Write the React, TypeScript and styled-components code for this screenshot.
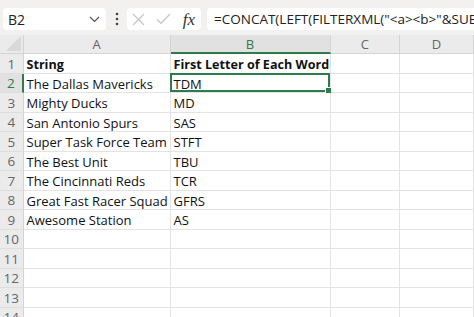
import React from "react";
import styled, { createGlobalStyle } from "styled-components";

const Global = createGlobalStyle`
  html, body { margin: 0; padding: 0; background: #ffffff; }
  body { font-family: "Open Sans", "Noto Sans", sans-serif; overflow: hidden; }
`;

const GREEN = "#2f7a4f";

const Page = styled.div`
  width: 474px;
  height: 317px;
  overflow: hidden;
  display: flex;
  flex-direction: column;
`;

const Toolbar = styled.div`
  height: 35px;
  flex: none;
  background: #f2f1f0;
  display: flex;
  align-items: flex-start;
  padding: 8px 0 0 3px;
  box-sizing: border-box;
`;

const Box = styled.div<{ $w?: string }>`
  height: 22px;
  background: #ffffff;
  border-radius: 4px;
  display: flex;
  align-items: center;
  box-sizing: border-box;
  width: ${(p) => p.$w || "auto"};
  flex: none;
`;

const NameBox = styled(Box)`
  justify-content: space-between;
  padding: 0 6px 0 5px;
  font-size: 14px;
  color: #222;
`;

const Dots = styled.div`
  width: 21px;
  flex: none;
  height: 22px;
  display: flex;
  align-items: center;
  justify-content: center;
`;

const IconBox = styled(Box)`
  padding: 0 4px 0 5px;
  justify-content: space-between;
`;

const Fx = styled.span`
  font-family: "Liberation Serif", "DejaVu Serif", serif;
  font-style: italic;
  font-size: 17px;
  color: #333;
  padding-right: 2px;
  line-height: 1;
`;

const FormulaBox = styled(Box)`
  margin-left: 6px;
  flex: 1;
  padding-left: 7px;
  border-radius: 4px 0 0 4px;
  font-size: 13.5px;
  color: #222;
  white-space: nowrap;
  overflow: hidden;
`;

const Grid = styled.div`
  display: grid;
  grid-template-columns: 23.5px 147px 160px 69.5px 74px;
  grid-template-rows: 19px repeat(14, 19.5px);
  flex: none;
`;

const ColHead = styled.div<{ $sel?: boolean }>`
  background: ${(p) => (p.$sel ? "#e1e1e1" : "#ebebeb")};
  border-right: 1px solid #d4d4d4;
  border-bottom: ${(p) => (p.$sel ? `2px solid ${GREEN}` : "1px solid #d4d4d4")};
  box-sizing: border-box;
  display: flex;
  align-items: center;
  justify-content: center;
  font-size: 13px;
  color: ${(p) => (p.$sel ? GREEN : "#666")};
`;

const Corner = styled.div`
  background: #ebebeb;
  border-right: 1px solid #d4d4d4;
  border-bottom: 1px solid #d4d4d4;
  box-sizing: border-box;
  display: flex;
  align-items: flex-end;
  justify-content: flex-end;
  padding: 0 2px 2px 0;
`;

const RowHead = styled.div<{ $sel?: boolean }>`
  background: ${(p) => (p.$sel ? "#e1e1e1" : "#ebebeb")};
  border-right: ${(p) => (p.$sel ? `2px solid ${GREEN}` : "1px solid #d4d4d4")};
  border-bottom: 1px solid #dedede;
  box-sizing: border-box;
  display: flex;
  align-items: center;
  justify-content: center;
  font-size: 13.5px;
  color: ${(p) => (p.$sel ? GREEN : "#666")};
  padding-top: 1px;
`;

const Cell = styled.div<{ $bold?: boolean }>`
  position: relative;
  border-right: 1px solid #e3e3e3;
  border-bottom: 1px solid #e3e3e3;
  box-sizing: border-box;
  display: flex;
  align-items: center;
  padding: 2px 0 0 3px;
  font-size: ${(p) => (p.$bold ? "12.6px" : "13px")};
  font-weight: ${(p) => (p.$bold ? 700 : 400)};
  color: #111;
  white-space: nowrap;
  overflow: visible;
`;

const Selection = styled.div`
  position: absolute;
  left: -1px;
  top: -1px;
  right: 0;
  bottom: 0;
  border: 2px solid ${GREEN};
  pointer-events: none;
`;

const Handle = styled.div`
  position: absolute;
  right: -4px;
  bottom: -4px;
  width: 5px;
  height: 5px;
  background: ${GREEN};
  border: 1px solid #fff;
`;

const rows: [string, string][] = [
  ["String", "First Letter of Each Word"],
  ["The Dallas Mavericks", "TDM"],
  ["Mighty Ducks", "MD"],
  ["San Antonio Spurs", "SAS"],
  ["Super Task Force Team", "STFT"],
  ["The Best Unit", "TBU"],
  ["The Cincinnati Reds", "TCR"],
  ["Great Fast Racer Squad", "GFRS"],
  ["Awesome Station", "AS"],
  ["", ""],
  ["", ""],
  ["", ""],
  ["", ""],
  ["", ""],
];

export default function App() {
  return (
    <Page>
      <Global />
      <Toolbar>
        <NameBox $w="103px">
          <span>B2</span>
          <svg width="11" height="7" viewBox="0 0 11 7">
            <path d="M1 1 L5.5 5.5 L10 1" fill="none" stroke="#555" strokeWidth="1.2" />
          </svg>
        </NameBox>
        <Dots>
          <svg width="4" height="14" viewBox="0 0 4 14">
            <circle cx="2" cy="2" r="1.3" fill="#444" />
            <circle cx="2" cy="7" r="1.3" fill="#444" />
            <circle cx="2" cy="12" r="1.3" fill="#444" />
          </svg>
        </Dots>
        <IconBox $w="74px">
          <svg width="13" height="13" viewBox="0 0 13 13">
            <path d="M1 1 L12 12 M12 1 L1 12" stroke="#c4c4c4" strokeWidth="1.2" fill="none" />
          </svg>
          <svg width="15" height="12" viewBox="0 0 15 12">
            <path d="M1 6.5 L5 10.5 L14 1" stroke="#c4c4c4" strokeWidth="1.2" fill="none" />
          </svg>
          <Fx>fx</Fx>
        </IconBox>
        <FormulaBox>=CONCAT(LEFT(FILTERXML("&lt;a&gt;&lt;b&gt;"&amp;SUBSTITUTE(A2," ","&lt;/b&gt;&lt;b&gt;")&amp;"&lt;/b&gt;&lt;/a&gt;","//b"),1))</FormulaBox>
      </Toolbar>
      <Grid>
        <Corner>
          <svg width="15" height="15" viewBox="0 0 15 15">
            <path d="M15 0 L15 15 L0 15 Z" fill="#d9d9d9" />
          </svg>
        </Corner>
        <ColHead>A</ColHead>
        <ColHead $sel>B</ColHead>
        <ColHead>C</ColHead>
        <ColHead>D</ColHead>
        {rows.map(([a, b], i) => (
          <React.Fragment key={i}>
            <RowHead $sel={i === 1}>{i + 1}</RowHead>
            <Cell $bold={i === 0}>{a}</Cell>
            <Cell $bold={i === 0}>
              {b}
              {i === 1 && (
                <Selection>
                  <Handle />
                </Selection>
              )}
            </Cell>
            <Cell />
            <Cell />
          </React.Fragment>
        ))}
      </Grid>
    </Page>
  );
}
